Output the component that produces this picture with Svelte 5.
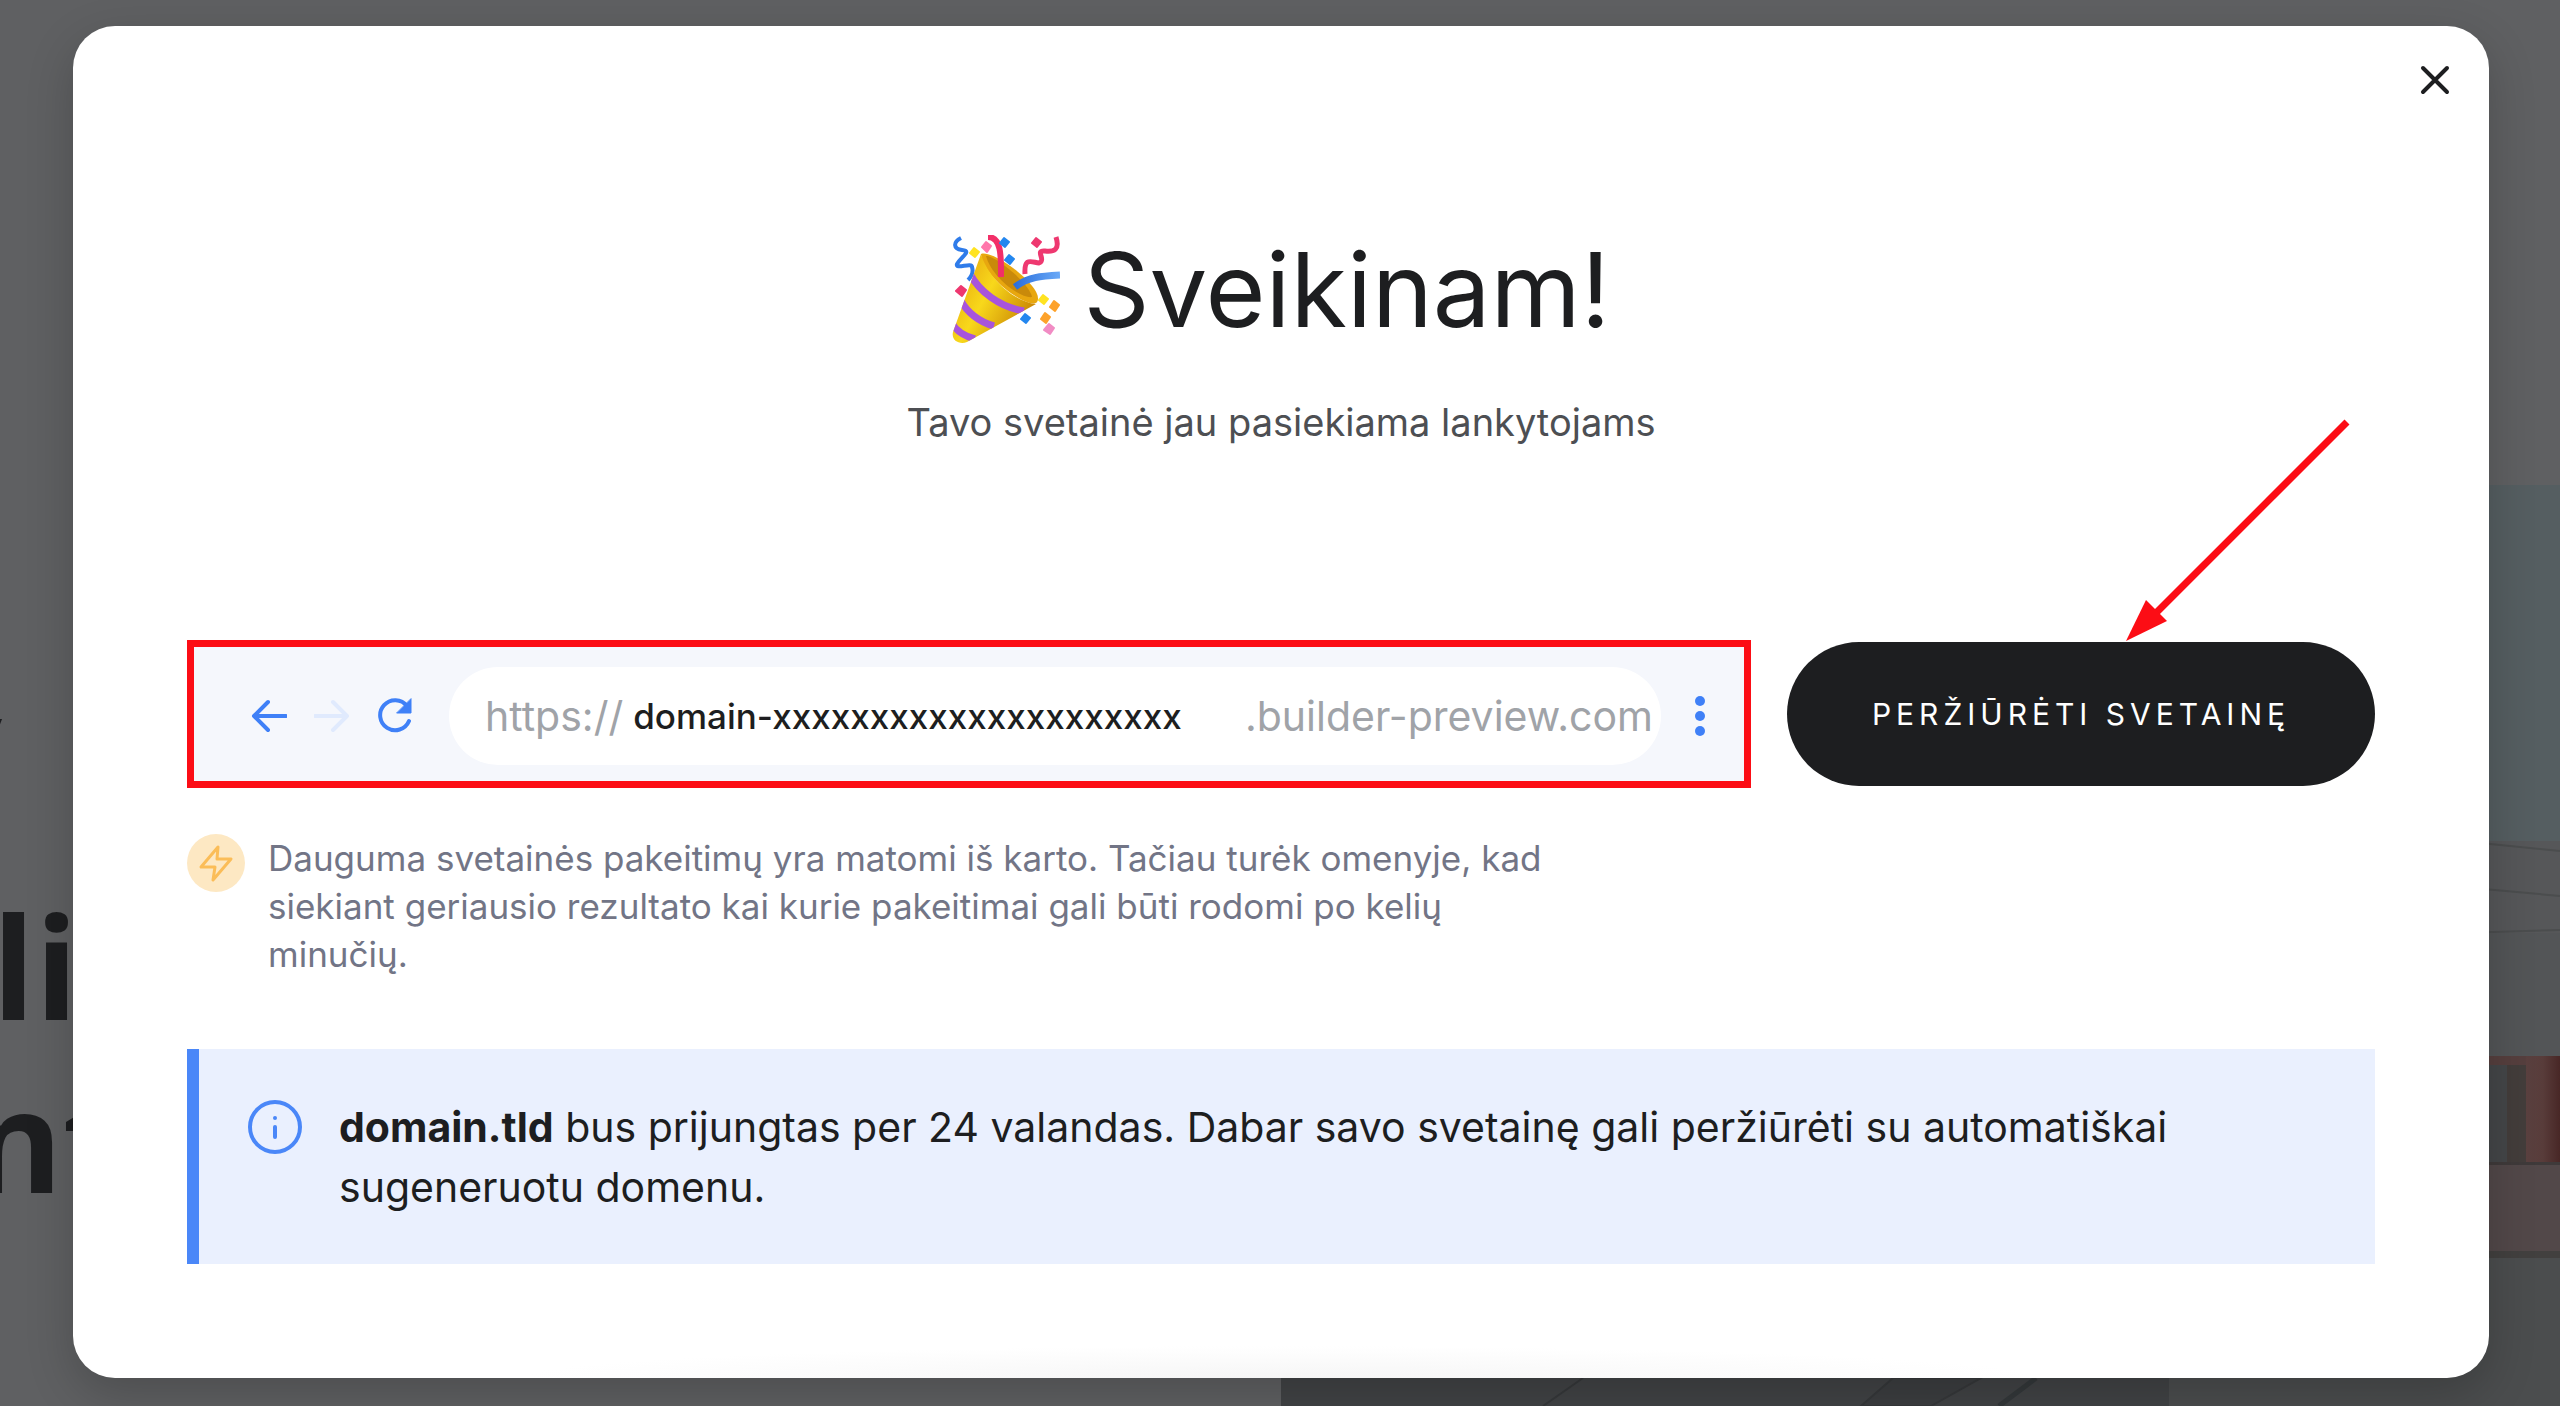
<script>
  const address = {
    scheme: 'https://',
    name: 'domain-xxxxxxxxxxxxxxxxxxxxx',
    host: '.builder-preview.com'
  };
</script>

<div class="page">
  <div class="site" aria-hidden="true">
    <div class="copy">
      <p class="lead">y</p>
      <p class="line first">li</p>
      <p class="line second">nt</p>
    </div>
    <svg class="photo" viewBox="0 0 1279 921" preserveAspectRatio="xMaxYMin slice">
      <defs>
        <linearGradient id="wall" x1="0" x2="1">
          <stop offset="0" stop-color="#5a4140" />
          <stop offset="0.500" stop-color="#583c3a" />
          <stop offset="1" stop-color="#482726" />
        </linearGradient>
      </defs>
      <rect width="1279" height="921" fill="#4b4d4e" />
      <rect width="1279" height="356" fill="#555e61" />
      <rect y="356" width="1279" height="92" fill="#565759" />
      <path d="M1180 356L1279 366M1180 402L1279 411M1180 448L1279 445" stroke="#4b4d4e" stroke-width="2" fill="none" />
      <rect y="448" width="1279" height="124" fill="#535557" />
      <rect y="571" width="1279" height="106" fill="#563f3e" />
      <rect x="1245" y="571" width="34" height="106" fill="url(#wall)" />
      <rect x="1180" y="580" width="46" height="97" fill="#444648" />
      <rect x="1226" y="580" width="19" height="97" fill="#433d3b" />
      <rect y="677" width="1279" height="3" fill="#3f3a3a" />
      <rect y="680" width="1279" height="86" fill="#524849" />
      <rect y="766" width="1279" height="7" fill="#42403f" />
      <rect y="860" width="888" height="61" fill="#414345" />
      <path d="M302 893L262 921M580 921L612 893H700L650 921Z" stroke="#36383a" fill="#3c3e40" stroke-width="2" />
      <path d="M718 921L755 893" stroke="#34383a" stroke-width="5" />
    </svg>
  </div>

  <div class="modal" role="dialog" aria-modal="true" aria-labelledby="title">
    <button class="close" type="button" aria-label="Uždaryti">
      <svg viewBox="0 0 30 30"><path d="M3 3L27 27M27 3L3 27" /></svg>
    </button>

    <header>
      <h1 id="title">
        <svg class="popper" viewBox="0 0 108 110" aria-hidden="true">
          <defs>
            <linearGradient id="cone" x1="0" y1="0" x2="1" y2="0.6">
              <stop offset="0" stop-color="#e29a0c" />
              <stop offset="0.5" stop-color="#f8d81b" />
              <stop offset="1" stop-color="#c98403" />
            </linearGradient>
            <linearGradient id="blue" x1="0" x2="1">
              <stop offset="0" stop-color="#2b6fdc" />
              <stop offset="1" stop-color="#6aa9f7" />
            </linearGradient>
            <clipPath id="body"><path d="M29 19C34 38 58 66 84 69L15 107C7 110 -1 105 1 97Z" /></clipPath>
          </defs>
          <path d="M9 3C1 7 1 14 10 15C20 16 10 21 5 29C3 35 20 27 20 32C22 38 18 43 16 45" fill="none" stroke="#2f7cea" stroke-width="4" stroke-linejoin="round" />
          <path d="M29 19C42 14 94 54 85 67C78 76 30 42 29 19Z" fill="#e8a70f" />
          <path d="M34 21C43 20 78 49 80 62C69 64 40 43 34 21Z" fill="#c98a0a" />
          <path d="M29 19C34 38 58 66 84 69L15 107C7 110 -1 105 1 97Z" fill="url(#cone)" />
          <g clip-path="url(#body)" fill="none" stroke="#a854dc" stroke-width="7">
            <path d="M18 39C27 56 47 72 72 76" />
            <path d="M9 66C15 77 27 87 42 91" />
            <path d="M-1 87C4 96 11 101 23 104" />
          </g>
          <path d="M36 2C50 2 49 23 49 42" fill="none" stroke="#f22f68" stroke-width="6" />
          <path d="M63 52C76 42 89 41 108 40" fill="none" stroke="url(#blue)" stroke-width="7" />
          <path d="M104 2C108 15 102 17 93 16C82 15 95 25 87 28C79 27 72 22 73 39" fill="none" stroke="#ee3870" stroke-width="5" stroke-linejoin="round" />
          <g stroke-width="2" stroke-linejoin="round">
            <path fill="#ff77ab" stroke="#ff77ab" d="M34 7l5 4-4 6-5-5z" />
            <path fill="#2487ef" stroke="#2487ef" d="M52 3l5 4-4 5-5-4zM57 20l5 4-4 5-5-4zM73 79l5 4-4 5-5-4z" />
            <path fill="#ffe321" stroke="#ffe321" d="M22 13l5 4-4 5-5-4zM91 60l5 4-4 5-5-4z" />
            <path fill="#ee3870" stroke="#ee3870" d="M84 3l5 4-4 5-5-4zM9 51l5 4-4 6-6-5z" />
            <path fill="#fda22b" stroke="#fda22b" d="M102 66l5 4-4 6-5-4zM93 78l5 4-4 6-5-4z" />
            <path fill="#f18cc4" stroke="#f18cc4" d="M97 89l5 4-4 6-6-4z" />
          </g>
        </svg>
        <span>Sveikinam!</span>
      </h1>
      <p class="subtitle">Tavo svetainė jau pasiekiama lankytojams</p>
    </header>

    <section class="publish">
      <div class="browser">
        <button type="button" class="nav" aria-label="Atgal">
          <svg viewBox="0 0 36 36"><path d="M35 18H3M17 4L3 18L17 32" /></svg>
        </button>
        <button type="button" class="nav faded" aria-label="Pirmyn" disabled>
          <svg viewBox="0 0 36 36"><path d="M1 18H33M19 4L33 18L19 32" /></svg>
        </button>
        <button type="button" class="nav" aria-label="Perkrauti">
          <svg viewBox="0 0 36 36"><path d="M32 23A15 15 0 1 1 30 8" /><path class="solid" d="M34 1V15H20Z" /></svg>
        </button>
        <div class="address">
          <span>{address.scheme}</span>
          <strong>{address.name}</strong>
          <span class="host">{address.host}</span>
        </div>
        <button type="button" class="more" aria-label="Daugiau">
          <svg viewBox="0 0 10 40"><circle cx="5" cy="5" r="5" /><circle cx="5" cy="20" r="5" /><circle cx="5" cy="35" r="5" /></svg>
        </button>
      </div>

      <div class="action">
        <svg class="arrow" viewBox="0 0 226 224" aria-hidden="true">
          <path d="M222 4L30 196" stroke="#fc0d15" stroke-width="7" />
          <path d="M1 223L21 182L42 203Z" fill="#fc0d15" />
        </svg>
        <button type="button" class="view">PERŽIŪRĖTI SVETAINĘ</button>
      </div>
    </section>

    <div class="note">
      <svg viewBox="0 0 58 58" aria-hidden="true">
        <circle cx="29" cy="29" r="29" fill="#fde8c3" />
        <path d="M31 13L14 33H28L26 46L44 25H30Z" fill="none" stroke="#fbbd58" stroke-width="3" stroke-linejoin="round" />
      </svg>
      <p>Dauguma svetainės pakeitimų yra matomi iš karto. Tačiau turėk omenyje, kad siekiant geriausio rezultato kai kurie pakeitimai gali būti rodomi po kelių minučių.</p>
    </div>

    <div class="info">
      <svg viewBox="0 0 54 54" aria-hidden="true">
        <circle cx="27" cy="27" r="25" fill="none" stroke="#4a87f8" stroke-width="4" />
        <circle cx="27" cy="18" r="2" fill="#4a87f8" />
        <path d="M27 27V37" stroke="#4a87f8" stroke-width="4" stroke-linecap="round" />
      </svg>
      <p><b>domain.tld</b> bus prijungtas per 24 valandas. Dabar savo svetainę gali peržiūrėti su automatiškai sugeneruotu domenu.</p>
    </div>
  </div>
</div>

<style>
  :global(body) {
    margin: 0;
    background: #5f6062;
  }

  .page {
    position: relative;
    box-sizing: border-box;
    min-height: 100vh;
    padding: 26px 71px 28px 73px;
    display: flex;
    overflow: hidden;
    font-family: Inter, 'Liberation Sans', sans-serif;
    color: #1d1e20;
  }

  p,
  h1 {
    margin: 0;
    font-weight: 400;
  }

  svg {
    display: block;
    flex: none;
  }

  button {
    border: 0;
    padding: 0;
    background: none;
    font: inherit;
    color: inherit;
    cursor: pointer;
  }

  .site {
    position: absolute;
    inset: 0;
    display: grid;
    grid-template-columns: 1281px 1fr;
    font-family: 'Open Sans', 'Noto Sans', sans-serif;
  }

  .copy {
    display: flex;
    flex-direction: column;
    align-items: flex-start;
    padding-top: 689px;
    margin-left: -30px;
  }

  .lead {
    font-size: 64px;
    line-height: 80px;
    height: 190px;
  }

  .line {
    font-size: 141px;
    font-weight: 700;
    line-height: 173px;
  }

  .first {
    padding-left: 22px;
  }

  .photo {
    width: 100%;
    height: 921px;
    margin-top: 485px;
  }

  .modal {
    position: relative;
    flex: 1;
    box-sizing: border-box;
    padding: 186px 114px 114px;
    border-radius: 42px;
    background: radial-gradient(ellipse 760px 32px at 50% 100%, #f6f6f6, #ffffff) #ffffff;
    box-shadow: 0 16px 48px rgba(0, 0, 0, 0.2);
  }

  .close {
    position: absolute;
    top: 39px;
    right: 39px;
  }

  .close svg {
    width: 30px;
    height: 30px;
    fill: none;
    stroke: #1d1e20;
    stroke-width: 4;
    stroke-linecap: round;
  }

  header {
    text-align: center;
  }

  h1 {
    display: flex;
    justify-content: center;
    align-items: center;
    gap: 24px;
    font-size: 103px;
    line-height: 156px;
  }

  .popper {
    width: 108px;
    height: 110px;
  }

  .subtitle {
    margin-top: 24px;
    font-size: 38px;
    line-height: 60px;
    color: #4d4f53;
  }

  .publish {
    display: flex;
    gap: 36px;
    align-items: center;
    margin-top: 188px;
  }

  .browser {
    flex: 1;
    box-sizing: border-box;
    height: 148px;
    display: flex;
    align-items: center;
    padding: 3px 39px 0 57px;
    border: 7px solid #fc0d15;
    background: #f5f7fc;
  }

  .nav {
    margin-right: 27px;
  }

  .nav svg {
    width: 36px;
    height: 36px;
    fill: none;
    stroke: #3f80f7;
    stroke-width: 4;
    stroke-linecap: round;
    stroke-linejoin: round;
  }

  .nav .solid {
    fill: #3f80f7;
    stroke-width: 1;
  }

  .faded svg {
    stroke: #e0eafd;
  }

  .address {
    flex: 1;
    box-sizing: border-box;
    height: 98px;
    margin: 0 34px 0 9px;
    padding: 0 8px 0 36px;
    display: flex;
    align-items: center;
    gap: 10px;
    border-radius: 49px;
    background: #ffffff;
    font-size: 41px;
    white-space: nowrap;
    color: #a0a3a8;
  }

  .address strong {
    font-weight: 500;
    font-size: 35px;
    color: #1d1e20;
  }

  .host {
    margin-left: auto;
  }

  .more svg {
    width: 10px;
    height: 40px;
    fill: #3f80f7;
  }

  .action {
    position: relative;
    width: 588px;
  }

  .arrow {
    position: absolute;
    right: 24px;
    bottom: 144px;
    width: 226px;
    height: 224px;
  }

  .view {
    width: 100%;
    height: 144px;
    border-radius: 72px;
    background: #1d1e20;
    color: #ffffff;
    font-size: 30px;
    letter-spacing: 5px;
  }

  .note {
    display: flex;
    gap: 23px;
    margin-top: 46px;
  }

  .note svg {
    width: 58px;
    height: 58px;
  }

  .note p {
    width: 1290px;
    font-size: 35px;
    line-height: 48px;
    color: #727586;
  }

  .info {
    display: flex;
    gap: 37px;
    margin-top: 71px;
    padding: 48px 56px 47px 49px;
    border-left: 12px solid #4a87f8;
    background: #eaf0fe;
    font-size: 41px;
    line-height: 60px;
  }

  .info svg {
    width: 54px;
    height: 54px;
    margin-top: 3px;
  }
</style>
